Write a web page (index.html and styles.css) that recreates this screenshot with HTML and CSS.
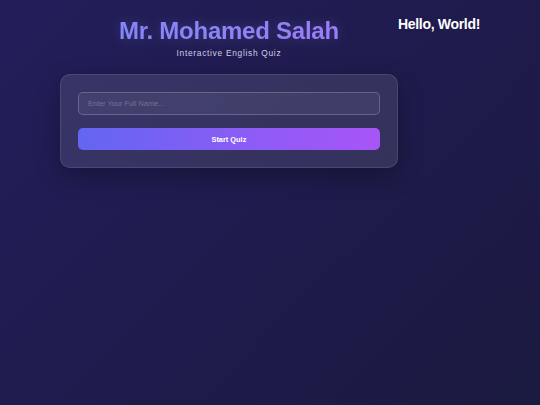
FILE: index.html
```html
<!DOCTYPE html>
<html lang="en">
<head>
<meta charset="utf-8">
<title>Interactive English Quiz</title>
<link rel="stylesheet" href="styles.css">
</head>
<body>
  <main class="app">
    <header class="header">
      <h1 class="title">Mr. Mohamed Salah</h1>
      <p class="subtitle">Interactive English Quiz</p>
    </header>
    <section class="card">
      <input class="name-input" type="text" placeholder="Enter Your Full Name...">
      <button class="start-btn" type="button">Start Quiz</button>
    </section>
  </main>
  <h1 class="hello">Hello, World!</h1>
</body>
</html>
```

FILE: styles.css
```css
html, body {
  margin: 0;
  padding: 0;
}

body {
  min-height: 405px;
  background: linear-gradient(135deg, #231e5a 0%, #1f1b4d 50%, #1b1a40 100%);
  font-family: "Liberation Sans", Arial, sans-serif;
  display: flex;
  justify-content: center;
  align-items: flex-start;
  color: #fff;
}

.app {
  width: 338px;
  flex-shrink: 0;
  padding-top: 16px;
}

.header {
  text-align: center;
  margin-bottom: 16px;
}

.title {
  margin: 0;
  font-size: 24px;
  line-height: 29px;
  font-weight: 700;
  letter-spacing: -0.25px;
  background: linear-gradient(90deg, #7f86f6 0%, #8f84f8 50%, #a577f6 100%);
  -webkit-background-clip: text;
  background-clip: text;
  color: transparent;
  filter: drop-shadow(0 0 6px rgba(129, 140, 248, 0.25));
}

.subtitle {
  margin: 3px 0 0;
  font-size: 8.4px;
  line-height: 10px;
  letter-spacing: 0.7px;
  color: #cfcee4;
}

.card {
  background: rgba(255, 255, 255, 0.1);
  border: 1px solid rgba(255, 255, 255, 0.1);
  border-radius: 10px;
  padding: 17px;
  box-shadow: 0 8px 24px rgba(0, 0, 0, 0.28);
  display: flex;
  flex-direction: column;
  gap: 13px;
}

.name-input {
  box-sizing: border-box;
  width: 100%;
  height: 23px;
  margin: 0;
  padding: 0 9px;
  background: rgba(255, 255, 255, 0.06);
  border: 1px solid rgba(255, 255, 255, 0.2);
  border-radius: 5px;
  font-family: "Liberation Sans", Arial, sans-serif;
  font-size: 7.4px;
  color: #fff;
  outline: none;
}

.name-input::placeholder {
  color: rgba(255, 255, 255, 0.27);
}

.start-btn {
  box-sizing: border-box;
  width: 100%;
  height: 22px;
  margin: 0;
  padding: 0;
  border: none;
  border-radius: 5px;
  background: linear-gradient(90deg, #6366f1 0%, #8b5cf6 55%, #a855f7 100%);
  color: #fff;
  font-family: "Liberation Sans", Arial, sans-serif;
  font-size: 7.4px;
  font-weight: 700;
  cursor: pointer;
}

.hello {
  margin: 16px 0 0;
  flex-shrink: 0;
  font-size: 14px;
  line-height: 17px;
  font-weight: 700;
  letter-spacing: -0.3px;
  color: #fff;
}
```
